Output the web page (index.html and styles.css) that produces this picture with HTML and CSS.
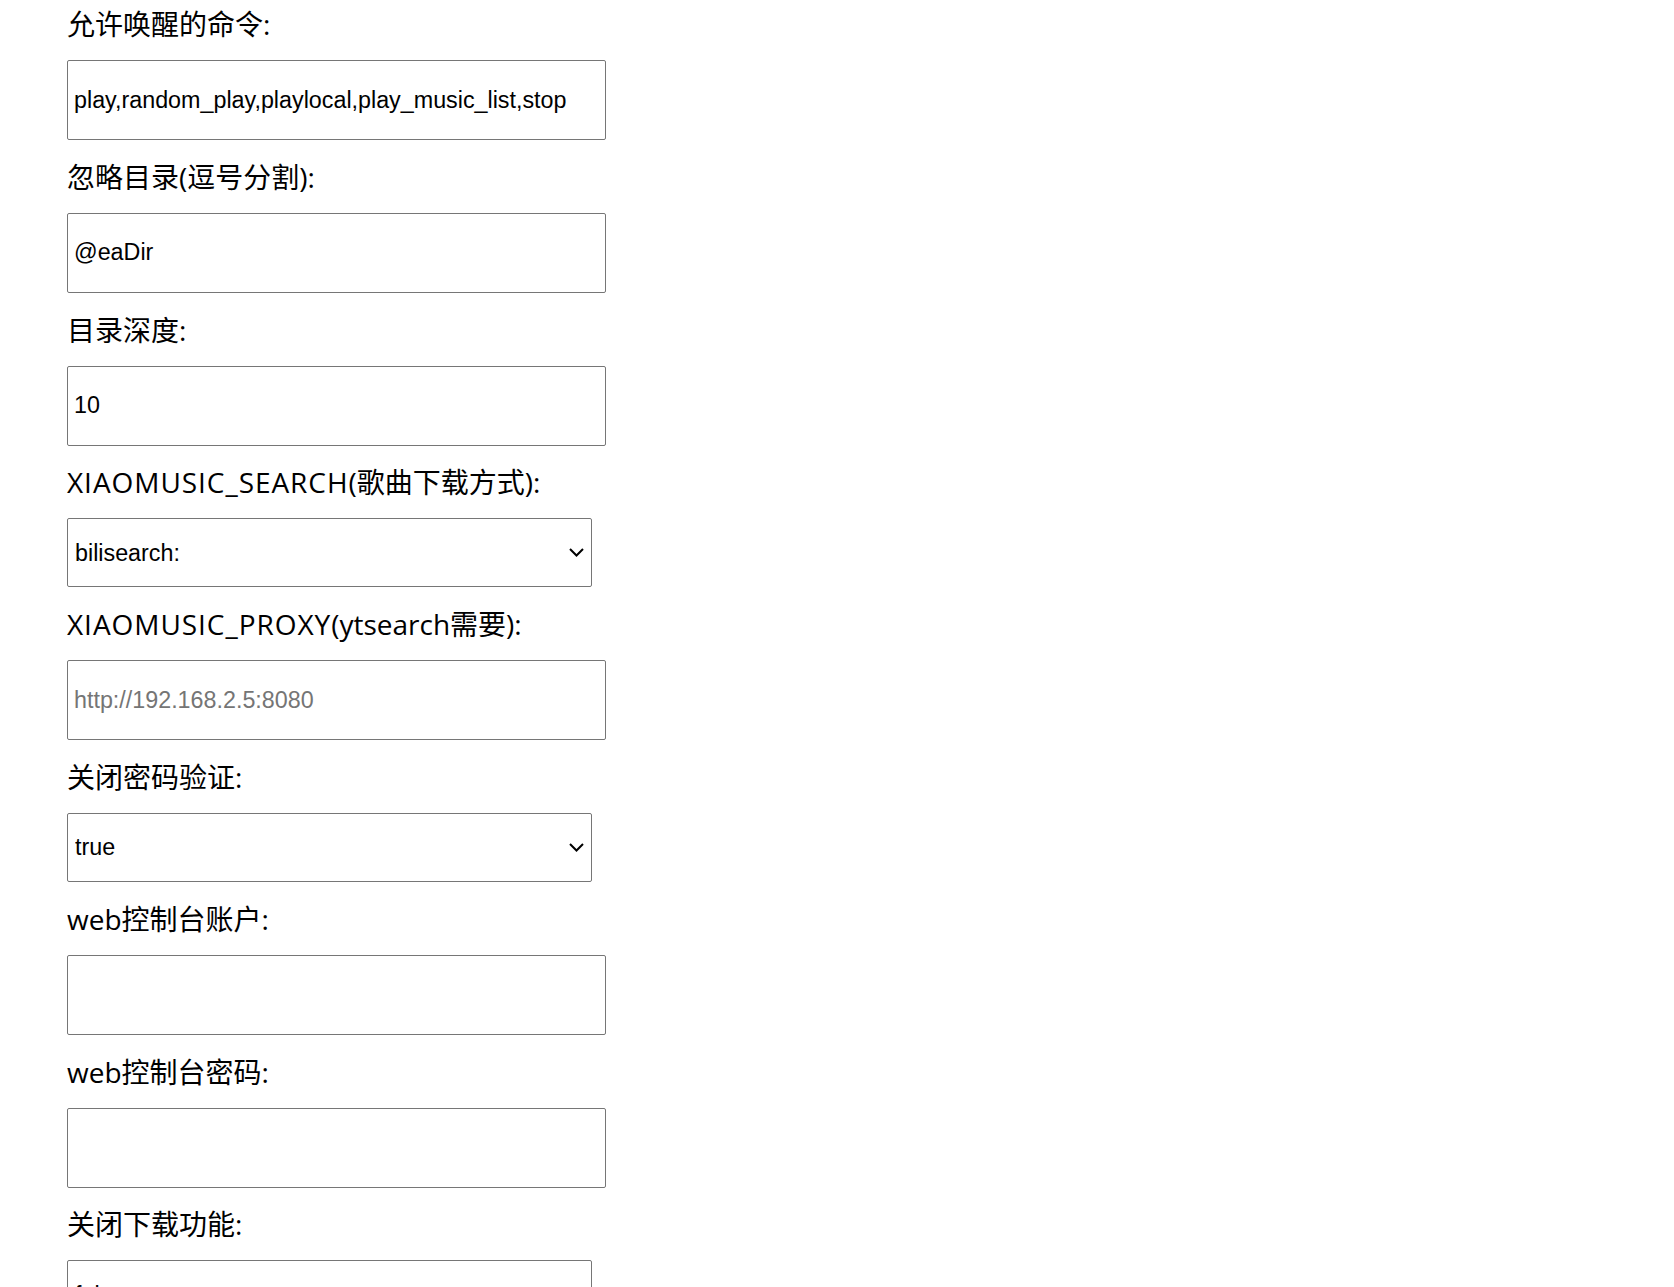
FILE: index.html
```html
<!DOCTYPE html>
<html lang="zh">
<head>
<meta charset="utf-8">
<title>设置</title>
<link rel="stylesheet" href="styles.css">
</head>
<body>
<div class="form">
  <div class="group">
    <label class="label">允许唤醒的命令:</label>
    <input class="field" type="text" value="play,random_play,playlocal,play_music_list,stop">
  </div>
  <div class="group">
    <label class="label">忽略目录(逗号分割):</label>
    <input class="field" type="text" value="@eaDir">
  </div>
  <div class="group">
    <label class="label">目录深度:</label>
    <input class="field" type="text" value="10">
  </div>
  <div class="group">
    <label class="label"><span class="caps">XIAOMUSIC_SEARCH</span>(歌曲下载方式):</label>
    <div class="select-wrap">
      <select class="select"><option>bilisearch:</option></select>
      <svg class="chev" width="15" height="9" viewBox="0 0 15 9"><path d="M1 1 L7.5 7.5 L14 1" fill="none" stroke="#000" stroke-width="2"/></svg>
    </div>
  </div>
  <div class="group">
    <label class="label"><span class="caps">XIAOMUSIC_PROXY</span>(ytsearch需要):</label>
    <input class="field" type="text" placeholder="http://192.168.2.5:8080">
  </div>
  <div class="group">
    <label class="label">关闭密码验证:</label>
    <div class="select-wrap">
      <select class="select"><option>true</option></select>
      <svg class="chev" width="15" height="9" viewBox="0 0 15 9"><path d="M1 1 L7.5 7.5 L14 1" fill="none" stroke="#000" stroke-width="2"/></svg>
    </div>
  </div>
  <div class="group">
    <label class="label">web控制台账户:</label>
    <input class="field" type="text" value="">
  </div>
  <div class="group">
    <label class="label">web控制台密码:</label>
    <input class="field" type="text" value="">
  </div>
  <div class="group">
    <label class="label">关闭下载功能:</label>
    <div class="select-wrap">
      <select class="select"><option>false</option></select>
      <svg class="chev" width="15" height="9" viewBox="0 0 15 9"><path d="M1 1 L7.5 7.5 L14 1" fill="none" stroke="#000" stroke-width="2"/></svg>
    </div>
  </div>
</div>
</body>
</html>
```

FILE: styles.css
```css
html, body {
  margin: 0;
  padding: 0;
  background: #fff;
}
.form {
  padding: 4px 0 0 67px;
  display: flex;
  flex-direction: column;
}
.group {
  display: flex;
  flex-direction: column;
  align-items: flex-start;
  margin-bottom: 16.8px;
}
.label {
  display: block;
  font-family: "Open Sans", "Noto Sans CJK SC", sans-serif;
  font-size: 28px;
  line-height: 40px;
  color: #000;
  margin-bottom: 16px;
  white-space: nowrap;
}
.caps {
  letter-spacing: 0.95px;
}
.field {
  box-sizing: border-box;
  width: 539px;
  height: 80px;
  margin: 0;
  padding: 0 6px;
  border: 1px solid #767676;
  border-radius: 2px;
  font-family: "Liberation Sans", Arial, sans-serif;
  font-size: 23.3px;
  color: #000;
  background: #fff;
  outline: none;
}
.field::placeholder {
  color: #757575;
}
.select-wrap {
  position: relative;
  width: 525px;
  height: 69px;
}
.select {
  -webkit-appearance: none;
  appearance: none;
  box-sizing: border-box;
  width: 100%;
  height: 100%;
  margin: 0;
  padding: 0 40px 0 7px;
  border: 1px solid #767676;
  border-radius: 2px;
  background: #fff;
  font-family: "Liberation Sans", Arial, sans-serif;
  font-size: 23.3px;
  color: #000;
  outline: none;
}
.chev {
  position: absolute;
  right: 8px;
  top: 30px;
  pointer-events: none;
}
```
